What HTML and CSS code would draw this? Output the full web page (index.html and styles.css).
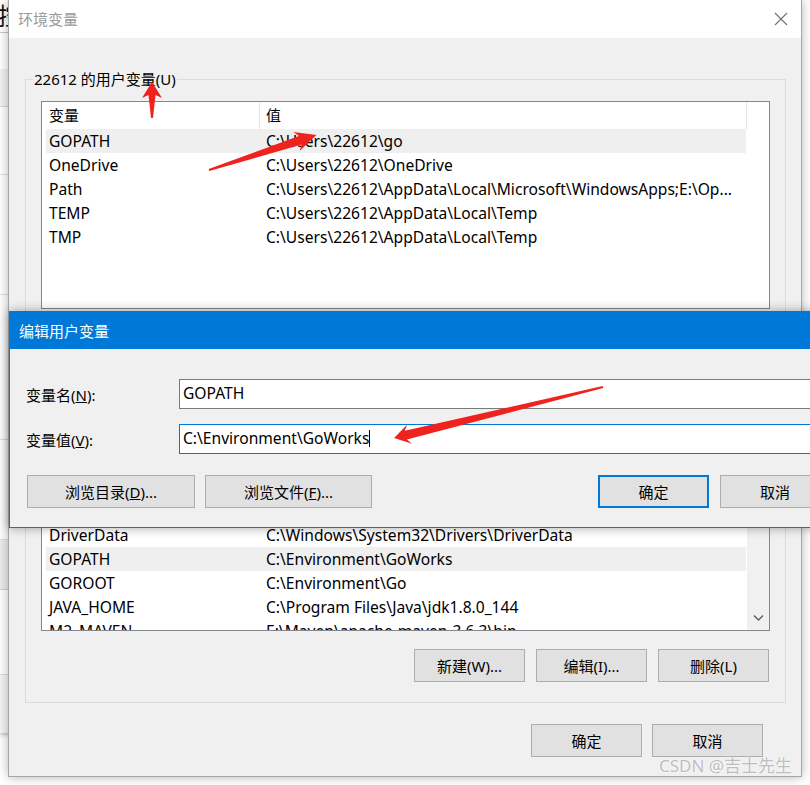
FILE: index.html
```html
<!DOCTYPE html>
<html lang="zh-CN">
<head>
<meta charset="utf-8">
<title>环境变量</title>
<link rel="stylesheet" href="styles.css">
</head>
<body>
<div class="desk">

  <div class="bgwin">
    <div class="bg-top"><span class="bg-char">控</span></div>
    <div class="bg-blank"></div>
    <div class="bg-band"></div>
    <div class="bg-row r1"></div>
    <div class="bg-row r2"></div>
    <div class="bg-row r3"></div>
    <div class="bg-row r4"></div>
    <div class="bg-band2"></div>
    <div class="bg-row r5"></div>
    <div class="bg-row r6"></div>
  </div>

  <div class="env">
    <div class="env-title">
      <span class="env-title-text">环境变量</span>
      <svg class="close" width="14" height="14" viewBox="0 0 14 14"><path d="M1 1L13 13M13 1L1 13" stroke="#707070" stroke-width="1.1" fill="none"/></svg>
    </div>
    <div class="env-body">
      <section class="group">
        <div class="group-label">22612 的用户变量(U)</div>
        <div class="list">
          <div class="list-main">
            <div class="lhead"><div class="hc1">变量</div><div class="hc2">值</div></div>
            <div class="row sel"><div class="rc1">GOPATH</div><div class="rc2">C:\Users\22612\go</div></div>
            <div class="row"><div class="rc1">OneDrive</div><div class="rc2">C:\Users\22612\OneDrive</div></div>
            <div class="row"><div class="rc1">Path</div><div class="rc2">C:\Users\22612\AppData\Local\Microsoft\WindowsApps;E:\Op...</div></div>
            <div class="row"><div class="rc1">TEMP</div><div class="rc2">C:\Users\22612\AppData\Local\Temp</div></div>
            <div class="row"><div class="rc1">TMP</div><div class="rc2">C:\Users\22612\AppData\Local\Temp</div></div>
          </div>
          <div class="list-side"></div>
        </div>
        <div class="group-btns">
          <div class="btn">新建(N)...</div>
          <div class="btn">编辑(E)...</div>
          <div class="btn">删除(D)</div>
        </div>
      </section>

      <section class="group group-sys">
        <div class="group-label">系统变量(S)</div>
        <div class="list">
          <div class="list-main">
            <div class="lhead"><div class="hc1">变量</div><div class="hc2">值</div></div>
            <div class="row"><div class="rc1">CLASSPATH</div><div class="rc2">.;%JAVA_HOME%\lib</div></div>
            <div class="row"><div class="rc1">ComSpec</div><div class="rc2">C:\Windows\system32\cmd.exe</div></div>
            <div class="row"><div class="rc1">configsetroot</div><div class="rc2">C:\Windows\ConfigSetRoot</div></div>
            <div class="row"><div class="rc1">DriverData</div><div class="rc2">C:\Windows\System32\Drivers\DriverData</div></div>
            <div class="row sel"><div class="rc1">GOPATH</div><div class="rc2">C:\Environment\GoWorks</div></div>
            <div class="row"><div class="rc1">GOROOT</div><div class="rc2">C:\Environment\Go</div></div>
            <div class="row"><div class="rc1">JAVA_HOME</div><div class="rc2">C:\Program Files\Java\jdk1.8.0_144</div></div>
            <div class="row"><div class="rc1">M2_MAVEN</div><div class="rc2">E:\Maven\apache-maven-3.6.3\bin</div></div>
          </div>
          <div class="list-side scrollbar">
            <svg class="chev" width="11" height="8" viewBox="0 0 11 8"><path d="M1 1.5L5.5 6L10 1.5" stroke="#606060" stroke-width="1.5" fill="none"/></svg>
          </div>
        </div>
        <div class="group-btns">
          <div class="btn">新建(W)...</div>
          <div class="btn">编辑(I)...</div>
          <div class="btn">删除(L)</div>
        </div>
      </section>

      <div class="footer">
        <div class="btn">确定</div>
        <div class="btn">取消</div>
      </div>
    </div>
  </div>

  <div class="edit">
    <div class="edit-title">编辑用户变量</div>
    <div class="edit-body">
      <div class="form">
        <label class="flabel">变量名(<u>N</u>):</label>
        <div class="input">GOPATH</div>
        <label class="flabel">变量值(<u>V</u>):</label>
        <div class="input focus">C:\Environment\GoWorks<span class="caret"></span></div>
      </div>
      <div class="edit-btns">
        <div class="btn wide">浏览目录(<u>D</u>)...</div>
        <div class="btn wide2">浏览文件(<u>F</u>)...</div>
        <div class="btn ok">确定</div>
        <div class="btn cancel">取消</div>
      </div>
    </div>
  </div>

  <svg class="arrows" width="810" height="785" viewBox="0 0 810 785">
    <g fill="#f0221d">
      <g transform="translate(152,118) rotate(-90)"><polygon points="0,-1 23,-3.5 20,-10 36,0 20,10 23,3.5 0,1"/></g>
      <g transform="translate(209,170) rotate(-18)"><polygon points="0,-1 96,-4.5 92,-10 113,0 92,10 96,4.5 0,1"/></g>
      <g transform="translate(603,387) rotate(166.3)"><polygon points="0,-1 203,-4.5 199,-10 215,0 199,10 203,4.5 0,1"/></g>
    </g>
  </svg>

  <div class="watermark">CSDN @吉士先生</div>
</div>
</body>
</html>
```

FILE: styles.css
```css
* { box-sizing: border-box; }
html, body { margin: 0; padding: 0; }
body {
  width: 810px;
  height: 785px;
  overflow: hidden;
  background: #ffffff;
  font-family: "Noto Sans", "Noto Sans CJK SC", sans-serif;
  font-size: 15px;
  color: #000;
}
.desk {
  position: relative;
  width: 810px;
  height: 785px;
  overflow: hidden;
  background: #ffffff;
}

/* background window strip at far left */
.bgwin {
  position: absolute;
  left: 0;
  top: 0;
  width: 40px;
  height: 733px;
  background: #fff;
  display: flex;
  flex-direction: column;
  box-shadow: 0 2px 4px rgba(0,0,0,0.25);
}
.bg-top {
  height: 33px;
  border-bottom: 1px solid #c9c9c9;
  overflow: hidden;
}
.bg-char {
  display: block;
  margin-left: -2px;
  margin-top: 2px;
  font-size: 24px;
  line-height: 28px;
  color: #111;
}
.bg-blank { height: 36px; }
.bg-band { height: 38px; background: #f2f2f2; border-bottom: 1px solid #d8d8d8; }
.bg-row { border-bottom: 1px solid #dedede; }
.r1 { height: 68px; }
.r2 { height: 120px; }
.r3 { height: 145px; }
.r4 { height: 100px; }
.bg-band2 { height: 50px; background: #ececec; border-bottom: 1px solid #d0d0d0; }
.r5 { height: 85px; }
.r6 { flex: 1; border-bottom: none; background: #f4f4f4; }

/* main dialog */
.env {
  position: absolute;
  left: 8px;
  top: 0;
  width: 794px;
  height: 777px;
  background: #f0f0f0;
  border: 1px solid #a6a6a6;
  border-top: none;
  box-shadow: 0 0 10px rgba(0,0,0,0.3);
  display: flex;
  flex-direction: column;
}
.env-title {
  height: 38px;
  flex: none;
  background: #ffffff;
  display: flex;
  align-items: center;
  justify-content: space-between;
  padding: 0 13px 0 9px;
  color: #9a9a9a;
}
.env-title-text { line-height: 20px; }
.close { display: block; }

.env-body {
  padding: 0 15px 0 16px;
}
.group {
  border: 1px solid #dcdcdc;
  margin-top: 41px;
  padding: 0 15px 20px 15px;
}
.group-sys { margin-top: 20px; }
.group-label {
  width: fit-content;
  margin: -11px 0 0 -8px;
  padding: 0 1px;
  background: #f0f0f0;
  line-height: 20px;
  white-space: nowrap;
}
.list {
  margin-top: 12px;
  height: 208px;
  border: 1px solid #828790;
  background: #ffffff;
  display: flex;
  overflow: hidden;
}
.list-main {
  width: 705px;
  flex: none;
  overflow: hidden;
}
.list-side {
  flex: 1;
  background: #ffffff;
}
.scrollbar {
  background: #f0f0f0;
  display: flex;
  flex-direction: column;
  justify-content: flex-end;
  align-items: center;
  padding-bottom: 8px;
}
.chev { display: block; }
.lhead {
  height: 27px;
  display: flex;
  line-height: 27px;
}
.hc1 {
  width: 218px;
  padding-left: 7px;
  border-right: 1px solid #e5e5e5;
}
.hc2 {
  width: 487px;
  padding-left: 6px;
  border-right: 1px solid #e5e5e5;
}
.row {
  height: 24px;
  line-height: 24px;
  margin-left: 4px;
  width: 700px;
  display: flex;
  white-space: nowrap;
  overflow: hidden;
  font-size: 15.6px;
}
.row.sel { background: #efefef; }
.rc1 { width: 214px; flex: none; padding-left: 3px; overflow: hidden; }
.rc2 { flex: 1; padding-left: 6px; overflow: hidden; }

.group-btns {
  margin-top: 18px;
  display: flex;
  justify-content: flex-end;
  gap: 11px;
  padding-right: 1px;
}
.btn {
  width: 111px;
  height: 33px;
  flex: none;
  border: 1px solid #adadad;
  background: #e1e1e1;
  display: flex;
  align-items: center;
  justify-content: center;
  white-space: nowrap;
  line-height: 20px;
}
.footer {
  margin-top: 21px;
  margin-right: 23px;
  display: flex;
  justify-content: flex-end;
  gap: 10px;
}

/* edit dialog */
.edit {
  position: absolute;
  left: 9px;
  top: 311px;
  width: 838px;
  height: 217px;
  border: 1px solid #0078d7;
  background: #f0f0f0;
  box-shadow: 0 0 10px rgba(0,0,0,0.35);
  display: flex;
  flex-direction: column;
}
.edit-title {
  height: 37px;
  flex: none;
  background: #0078d7;
  color: #ffffff;
  padding-left: 9px;
  display: flex;
  align-items: center;
}
.edit-body {
  padding: 30px 16px 19px 16px;
}
.form {
  display: grid;
  grid-template-columns: 153px 1fr;
  row-gap: 15px;
  align-items: center;
}
.flabel { line-height: 20px; padding-top: 1px; }
.input {
  height: 30px;
  border: 1px solid #7a7a7a;
  background: #ffffff;
  padding-left: 3px;
  line-height: 26px;
  white-space: nowrap;
  font-size: 15.6px;
}
.input.focus { border-color: #0078d7; }
.caret {
  display: inline-block;
  width: 1px;
  height: 17px;
  background: #000;
  vertical-align: -3px;
}
.edit-btns {
  margin-top: 21px;
  display: flex;
}
.btn.wide { width: 168px; margin-left: 1px; }
.btn.wide2 { width: 167px; margin-left: 10px; }
.btn.ok {
  margin-left: auto;
  border: 2px solid #0078d7;
}
.btn.cancel { margin-left: 11px; width: 110px; }

.arrows {
  position: absolute;
  left: 0;
  top: 0;
  pointer-events: none;
}
.watermark {
  position: absolute;
  left: 659px;
  top: 754px;
  font-size: 17px;
  line-height: 24px;
  color: #bdbdbd;
  text-shadow: 0 0 2px #ffffff, 0 0 1px #ffffff;
  white-space: nowrap;
}
```
